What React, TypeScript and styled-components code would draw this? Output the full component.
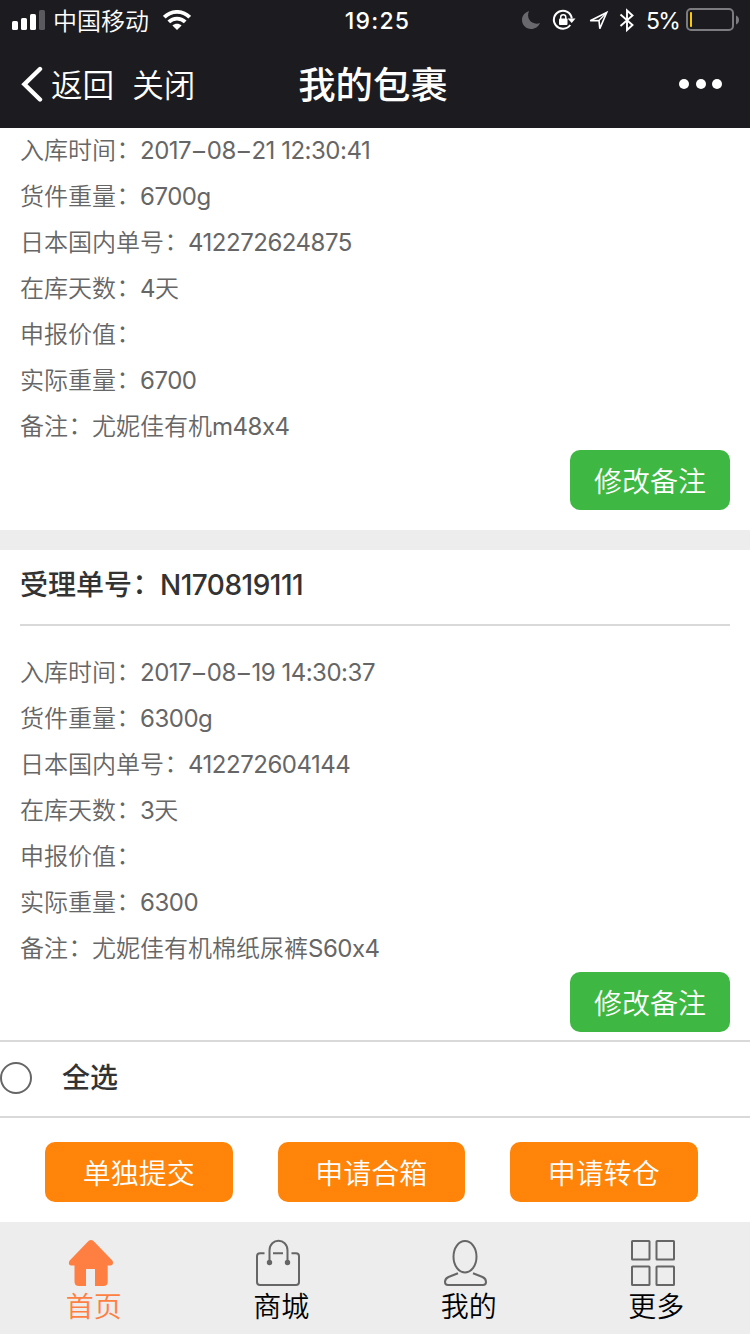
import React from 'react';
import styled, { createGlobalStyle } from 'styled-components';

const GlobalStyle = createGlobalStyle`
  * { box-sizing: border-box; }
  body {
    margin: 0;
    background: #fff;
    font-family: Inter, "Noto Sans CJK SC", sans-serif;
    font-weight: 350;
  }
  button { font: inherit; border: 0; padding: 0; background: none; }
`;

const Screen = styled.div`
  width: 750px;
  height: 1334px;
  display: flex;
  flex-direction: column;
  overflow: hidden;
`;

const TopBar = styled.header`
  height: 128px;
  flex: none;
  background: #1c1b20;
  color: #fff;
`;

const StatusBar = styled.div`
  height: 40px;
  display: grid;
  grid-template-columns: 1fr auto 1fr;
  align-items: center;
  padding: 0 12px 0 12px;
  font-size: 24px;
  line-height: 36px;
`;

const StatusGroup = styled.div<{ $end?: boolean }>`
  display: flex;
  align-items: center;
  justify-content: ${(p) => (p.$end ? 'flex-end' : 'flex-start')};
  height: 40px;
  margin-right: ${(p) => (p.$end ? '-1px' : '0')};
`;

const Carrier = styled.span`
  margin: 0 14px 0 7px;
  padding-top: 4px;
`;

const Clock = styled.span`
  font-weight: 500;
  font-size: 23px;
  letter-spacing: 1.2px;
  padding: 2px 0 0 5px;
`;

const Percent = styled.span`
  font-weight: 400;
  font-size: 23px;
  margin: 0 7px 0 12px;
  padding-top: 2px;
  letter-spacing: -1.8px;
`;

const NavBar = styled.div`
  height: 88px;
  display: grid;
  grid-template-columns: 1fr auto 1fr;
  align-items: center;
  padding: 0 28px 0 21px;
`;

const NavActions = styled.div`
  display: flex;
  align-items: center;
  font-size: 31.6px;
  line-height: 44px;
`;

const NavButton = styled.button<{ $gap: number }>`
  margin-left: ${(p) => p.$gap}px;
  padding-top: 3px;
  color: #fff;
`;

const Title = styled.h1`
  margin: 0;
  padding: 4px 0 0 3px;
  font-size: 37.4px;
  line-height: 50px;
  font-weight: 500;
`;

const MoreButton = styled.button`
  display: flex;
  justify-self: end;
  gap: 6.5px;
`;

const Dot = styled.span`
  width: 10px;
  height: 10px;
  border-radius: 50%;
  background: #fff;
`;

const PackageList = styled.main`
  flex: 1;
  min-height: 0;
  overflow: hidden;
  background: #ededed;
  display: flex;
  flex-direction: column;
  gap: 20px;
`;

const Card = styled.section<{ $scrolled?: boolean }>`
  flex: none;
  background: #fff;
  padding: 0 20px 20px;
  margin-top: ${(p) => (p.$scrolled ? '-1px' : '0')};
  display: flex;
  flex-direction: column;
`;

const Latin = styled.span<{ $tracking: number; $weight: number }>`
  letter-spacing: ${(p) => p.$tracking}px;
  font-weight: ${(p) => p.$weight};
`;

const Dash = styled.span`
  margin: 0 1.8px;
  font-weight: 400;
`;

const CardTitle = styled.h2`
  margin: 0 0 23px;
  height: 76px;
  line-height: 71px;
  border-bottom: 2px solid #d9d9d9;
  font-size: 28px;
  font-weight: 500;
  color: #333;
  display: flex;
`;

const Field = styled.div`
  height: 46px;
  line-height: 47px;
  font-size: 24px;
  color: #666;
  display: flex;
  white-space: pre;
`;

const Colon = styled.span`
  width: 1em;
  flex: none;
  padding-left: 0.02em;
  transform: translateY(-0.04em);
`;

const EditButton = styled.button`
  align-self: flex-end;
  margin-top: 1px;
  width: 160px;
  height: 60px;
  border-radius: 10px;
  background: #3eb843;
  color: #fff;
  font-size: 28px;
  line-height: 60px;
  padding-top: 2px;
`;

const SelectAll = styled.label`
  flex: none;
  height: 78px;
  border-top: 2px solid #d9d9d9;
  border-bottom: 2px solid #d9d9d9;
  background: #fff;
  display: flex;
  align-items: center;
  gap: 30px;
  font-size: 28px;
  line-height: 70px;
  font-weight: 500;
  color: #333;
`;

const Radio = styled.span`
  width: 32px;
  height: 32px;
  margin-bottom: 2px;
  border: 2px solid #666;
  border-radius: 50%;
`;

const SelectAllText = styled.span`
  padding-bottom: 2px;
`;

const Actions = styled.div`
  flex: none;
  height: 104px;
  padding: 24px 52px 0 45px;
  display: flex;
  gap: 45px;
  background: #fff;
`;

const ActionButton = styled.button`
  width: 187.5px;
  height: 60px;
  flex: none;
  border-radius: 10px;
  background: #ff8409;
  color: #fff;
  font-size: 28px;
  line-height: 60px;
  padding-top: 2px;
`;

const TabBar = styled.nav`
  flex: none;
  height: 112px;
  background: #ededed;
  display: grid;
  grid-template-columns: repeat(4, 187.5px);
`;

const Tab = styled.a<{ $active?: boolean }>`
  display: flex;
  flex-direction: column;
  align-items: center;
  padding-top: 17px;
  font-size: 28px;
  line-height: 40px;
  color: ${(p) => (p.$active ? '#ff7f42' : '#000')};
  svg { margin-right: 5px; flex: none; }
`;

const SignalIcon = () => (
  <svg width="34" height="20" viewBox="0 0 34 20" fill="#fff">
    <rect x="0" y="11" width="6" height="9" rx="1.6" />
    <rect x="9" y="8" width="6" height="12" rx="1.6" />
    <rect x="18" y="4" width="6" height="16" rx="1.6" />
    <rect x="27" y="0" width="6" height="20" rx="1.6" fill="#5b5a5e" />
  </svg>
);

const WifiIcon = () => (
  <svg width="28" height="20" viewBox="0 0 28 20" fill="none" stroke="#fff" strokeWidth="3.8">
    <path d="M1.3 7.2C8.4 .1 19.6 .1 26.7 7.2" />
    <path d="M5.8 11.9C10.4 7.4 17.6 7.4 22.2 11.9" />
    <path d="M14 20L9.4 15.4C12 13.100 16 13.100 18.6 15.4Z" fill="#fff" stroke="none" />
  </svg>
);

const StatusIcons = () => (
  <svg width="116" height="28" viewBox="518 6 116 28" fill="none" stroke="#fff">
    <path d="M529 11C524.500 12.500 522 16 522 19.800C522 25 526 29 531 29C535 29 538.500 26.700 540 23C532.500 25.800 525.500 19 529 11Z" fill="#69686c" stroke="none" />
    <path d="M570.200 25A9 9 0 1 1 571.800 18.500" strokeWidth="2" />
    <path d="M567.600 18.500H575.500L571.700 23Z" fill="#fff" stroke="none" />
    <rect x="559" y="18.500" width="8.500" height="6.500" rx="1" fill="#fff" stroke="none" />
    <path d="M560.700 19V17.300C560.700 14 565.800 14 565.800 17.300V19" strokeWidth="1.500" />
    <path d="M590.200 20.700L606.700 12.500L599.800 28.600L599 20.500Z" strokeWidth="1.600" />
    <path d="M599 20.500L606.700 12.500" strokeWidth="1.200" />
    <path d="M620.500 14.500L632.500 25L627 30V10.500L632.500 15.500L620.500 26" strokeWidth="1.900" />
  </svg>
);

const BatteryIcon = () => (
  <svg width="53" height="24" viewBox="0 0 53 24">
    <rect x="1" y="1" width="46" height="21" rx="4" fill="none" stroke="#7c7b7f" strokeWidth="2" />
    <rect x="4" y="4" width="2" height="15" rx=".8" fill="#ffc800" />
    <path d="M50 7.500C54 9 54 15 50 16.500Z" fill="#7c7b7f" />
  </svg>
);

const BackIcon = () => (
  <svg width="22" height="36" viewBox="0 0 22 36" fill="none" stroke="#fff" strokeWidth="4.400" strokeLinecap="round">
    <path d="M19 3L3.400 18.300L19 33.500" />
  </svg>
);

const HomeIcon = () => (
  <svg width="46" height="48" viewBox="0 0 46 48" fill="#ff7f42">
    <path d="M20.500 2Q23 .1 25.500 2L44.300 21.500C45.700 23.500 45 26.500 42.500 26.500H39.700V42.500Q39.700 47 35.500 47H27V30H18V47H11Q6.500 47 6.500 42.500V26.500H3C.8 26.500 .2 23.500 1.700 21.500Z" />
  </svg>
);

const BagIcon = () => (
  <svg width="46" height="48" viewBox="1 0 46 48" fill="none" stroke="#666" strokeWidth="2">
    <path d="M9.500 14.300H5Q2 14.300 2 17.300V43Q2 46 5 46H41Q44 46 44 43V17.300Q44 14.300 41 14.300H36.500M18 14.300H28" />
    <path d="M14.500 23V11.500C14.500 -1.500 32.500 -1.500 32.500 11.500V23" />
    <circle cx="14.500" cy="23.500" r="1.700" fill="#666" />
    <circle cx="32.500" cy="23.500" r="1.700" fill="#666" />
  </svg>
);

const UserIcon = () => (
  <svg width="46" height="48" viewBox="0 0 46 48" fill="none" stroke="#666" strokeWidth="2">
    <ellipse cx="22" cy="17.700" rx="11.500" ry="15.700" />
    <path d="M15 34.300L5.500 38C2.500 39.300 2 41 2 43C2 45.500 3.500 46 5 46H40C42 46 43 45 43 43C43 41 42.500 39.300 39.500 38L30 34.300" />
  </svg>
);

const GridIcon = () => (
  <svg width="46" height="48" viewBox="1 0 46 48" fill="none" stroke="#666" strokeWidth="2">
    <rect x="2" y="2" width="17.500" height="18.500" rx=".6" />
    <rect x="26.500" y="2" width="17.500" height="18.500" rx=".6" />
    <rect x="2" y="27.500" width="17.500" height="18.500" rx=".6" />
    <rect x="26.500" y="27.500" width="17.500" height="18.500" rx=".6" />
  </svg>
);

type Row = [label: string, value: string];

const packages: { order?: string; rows: Row[] }[] = [
  {
    rows: [
      ['入库时间', '2017–08–21 12:30:41'],
      ['货件重量', '6700g'],
      ['日本国内单号', '412272624875'],
      ['在库天数', '4天'],
      ['申报价值', ''],
      ['实际重量', '6700'],
      ['备注', '尤妮佳有机m48x4'],
    ],
  },
  {
    order: 'N170819111',
    rows: [
      ['入库时间', '2017–08–19 14:30:37'],
      ['货件重量', '6300g'],
      ['日本国内单号', '412272604144'],
      ['在库天数', '3天'],
      ['申报价值', ''],
      ['实际重量', '6300'],
      ['备注', '尤妮佳有机棉纸尿裤S60x4'],
    ],
  },
];

// Tightens Latin runs only, so Chinese characters keep their full em width.
const Value = ({ text }: { text: string }) => (
  <span>
    {text
      .split(/([\u4e00-\u9fff]+|–)/)
      .filter(Boolean)
      .map((part, i) => {
        if (part === '–') return <Dash key={i}>{part}</Dash>;
        if (/[\u4e00-\u9fff]/.test(part)) return part;
        return (
          <Latin key={i} $tracking={-0.48} $weight={400}>
            {part}
          </Latin>
        );
      })}
  </span>
);

const tabs = [
  { label: '首页', icon: <HomeIcon />, active: true },
  { label: '商城', icon: <BagIcon /> },
  { label: '我的', icon: <UserIcon /> },
  { label: '更多', icon: <GridIcon /> },
];

export default function App() {
  return (
    <Screen>
      <GlobalStyle />
      <TopBar>
        <StatusBar>
          <StatusGroup>
            <SignalIcon />
            <Carrier>中国移动</Carrier>
            <WifiIcon />
          </StatusGroup>
          <Clock>19:25</Clock>
          <StatusGroup $end>
            <StatusIcons />
            <Percent>5%</Percent>
            <BatteryIcon />
          </StatusGroup>
        </StatusBar>
        <NavBar>
          <NavActions>
            <BackIcon />
            <NavButton $gap={8}>返回</NavButton>
            <NavButton $gap={18}>关闭</NavButton>
          </NavActions>
          <Title>我的包裹</Title>
          <MoreButton aria-label="更多">
            <Dot />
            <Dot />
            <Dot />
          </MoreButton>
        </NavBar>
      </TopBar>
      <PackageList>
        {packages.map((pkg, i) => (
          <Card key={i} $scrolled={!pkg.order}>
            {pkg.order && (
              <CardTitle>
                受理单号<Colon>：</Colon>
                <Latin $tracking={-0.5} $weight={500}>{pkg.order}</Latin>
              </CardTitle>
            )}
            {pkg.rows.map(([label, value]) => (
              <Field key={label}>
                {label}
                <Colon>：</Colon>
                <Value text={value} />
              </Field>
            ))}
            <EditButton>修改备注</EditButton>
          </Card>
        ))}
      </PackageList>
      <SelectAll>
        <Radio />
        <SelectAllText>全选</SelectAllText>
      </SelectAll>
      <Actions>
        <ActionButton>单独提交</ActionButton>
        <ActionButton>申请合箱</ActionButton>
        <ActionButton>申请转仓</ActionButton>
      </Actions>
      <TabBar>
        {tabs.map((tab) => (
          <Tab key={tab.label} $active={tab.active}>
            {tab.icon}
            <span>{tab.label}</span>
          </Tab>
        ))}
      </TabBar>
    </Screen>
  );
}
